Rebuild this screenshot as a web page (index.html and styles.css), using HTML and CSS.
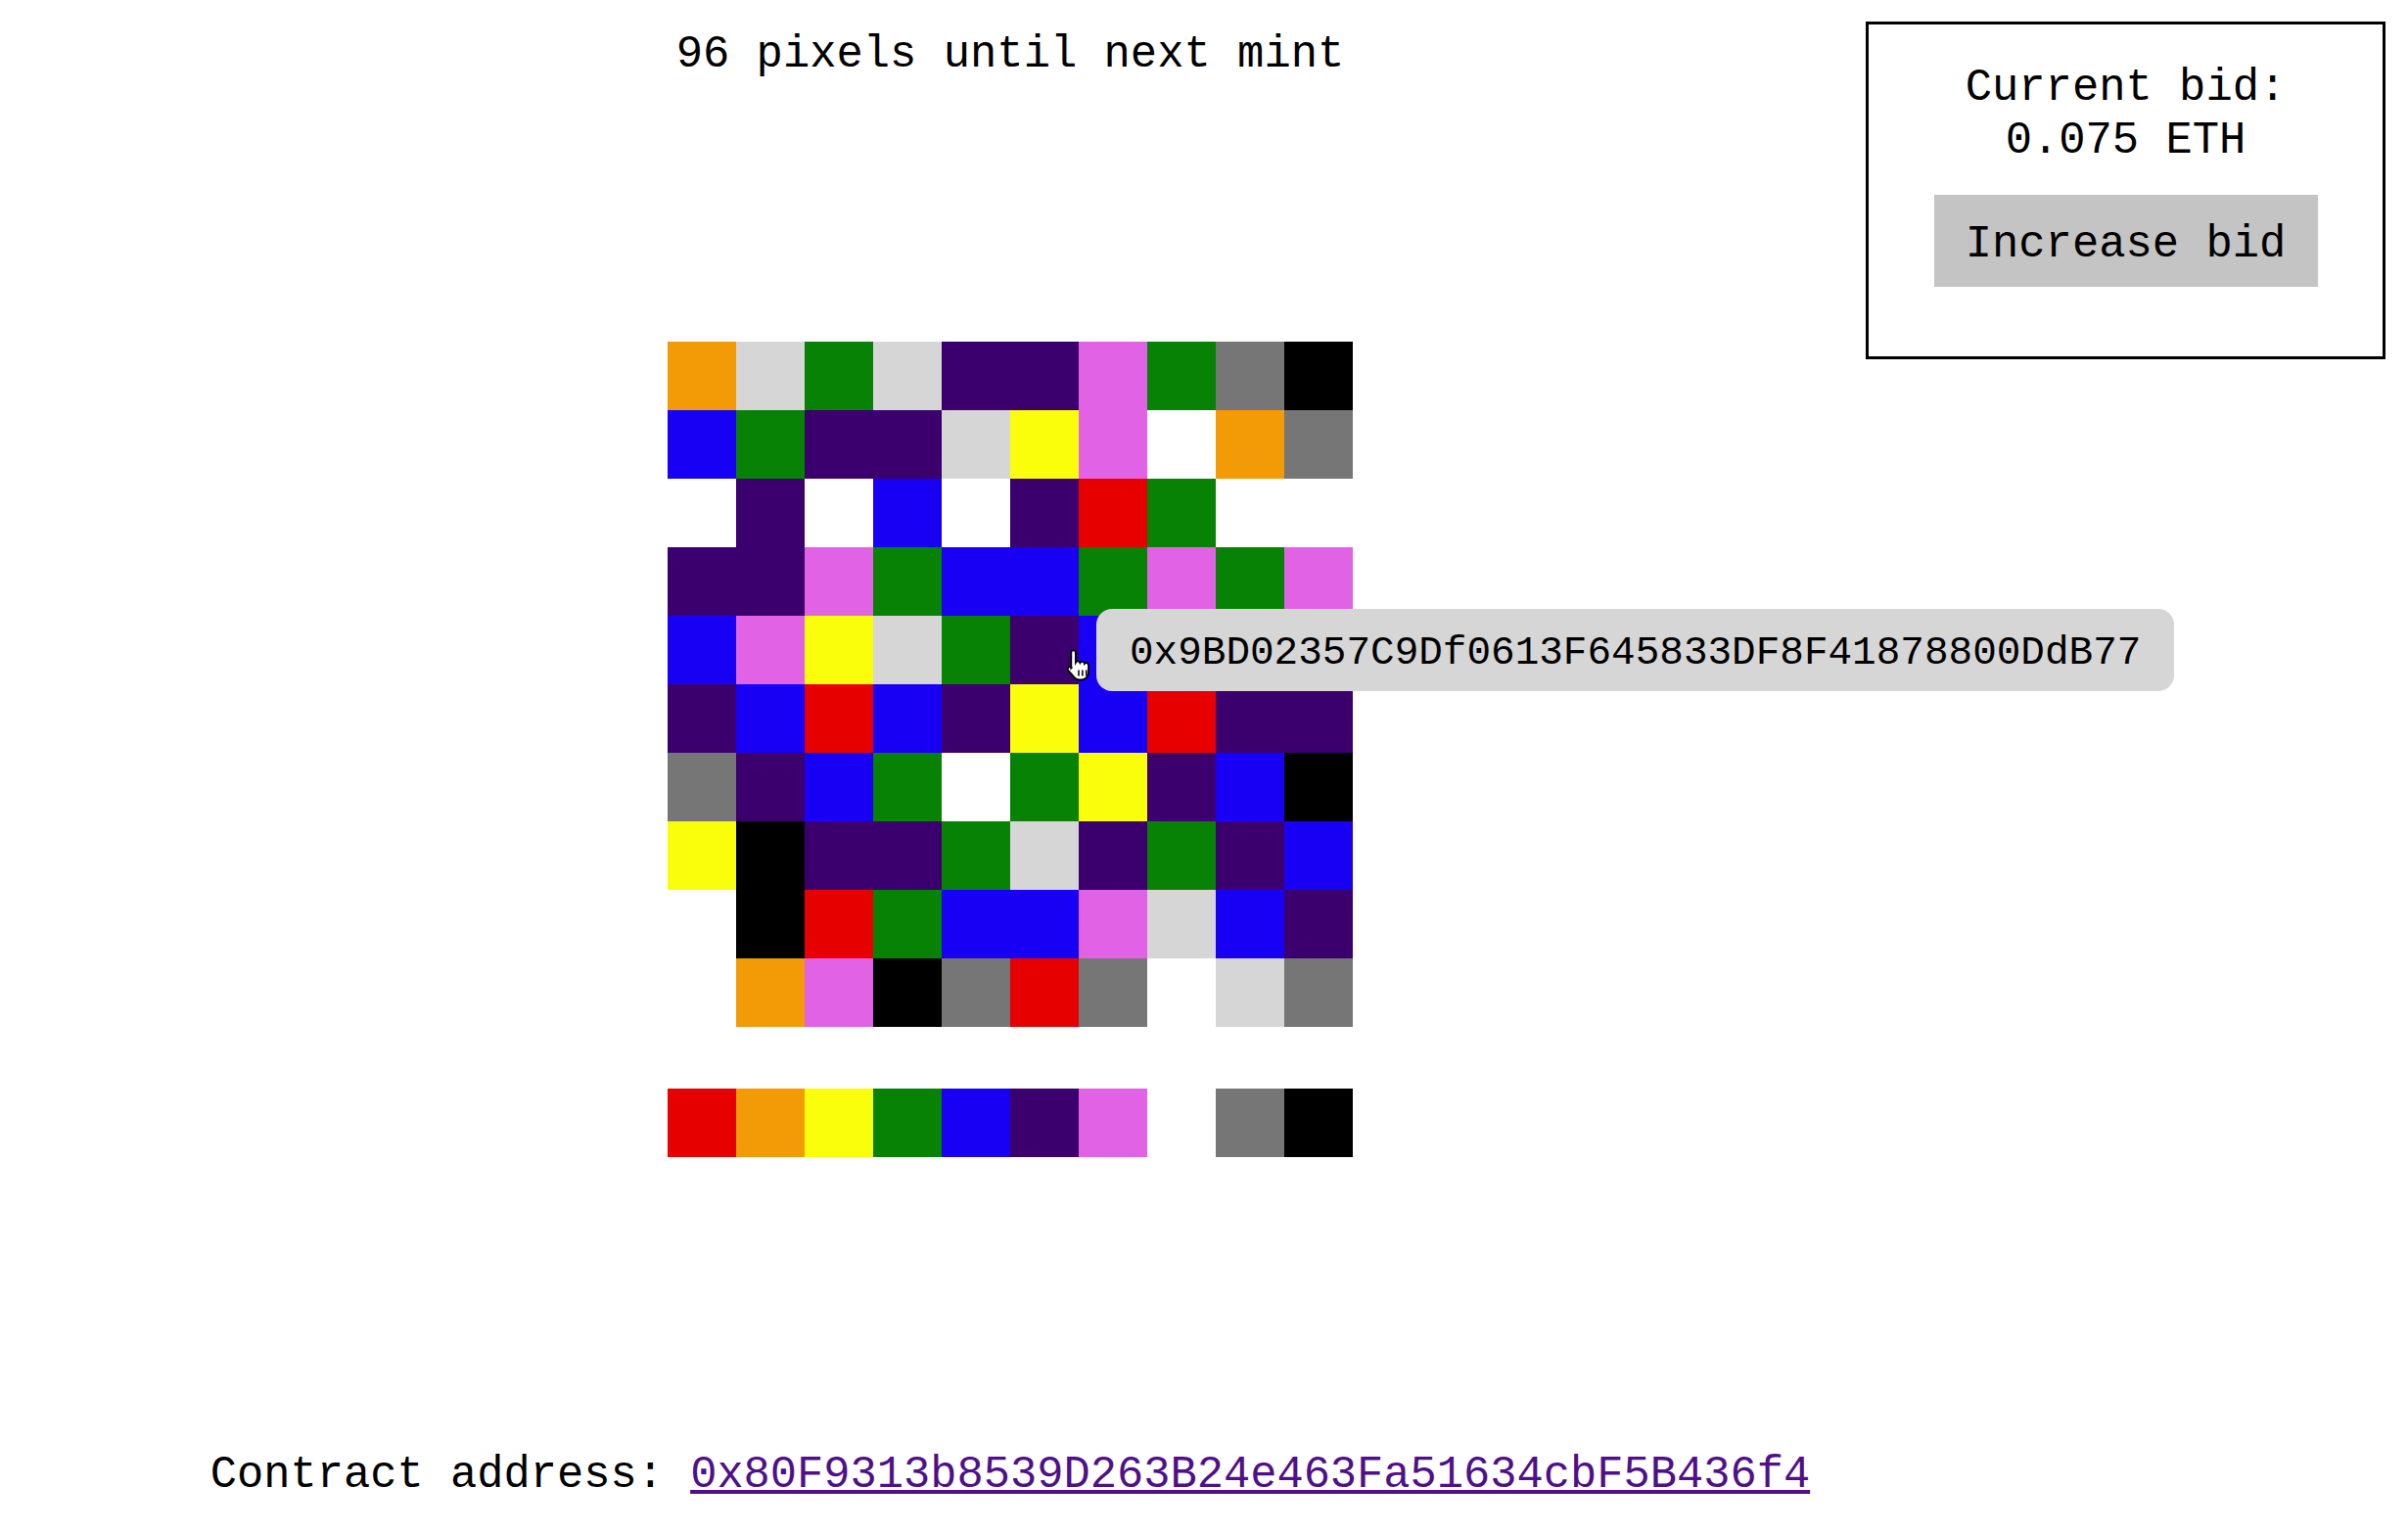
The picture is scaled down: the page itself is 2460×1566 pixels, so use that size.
FILE: index.html
```html
<!DOCTYPE html>
<html lang="en">
<head>
<meta charset="utf-8">
<title>Pixels</title>
<link rel="stylesheet" href="styles.css">
</head>
<body>
<div class="page">
  <main class="main">
    <div class="title">96 pixels until next mint</div>
    <div class="board-wrap">
      <div class="board">
        <div class="c o"></div><div class="c l"></div><div class="c g"></div><div class="c l"></div><div class="c p"></div><div class="c p"></div><div class="c k"></div><div class="c g"></div><div class="c a"></div><div class="c x"></div>
        <div class="c b"></div><div class="c g"></div><div class="c p"></div><div class="c p"></div><div class="c l"></div><div class="c y"></div><div class="c k"></div><div class="c w"></div><div class="c o"></div><div class="c a"></div>
        <div class="c w"></div><div class="c p"></div><div class="c w"></div><div class="c b"></div><div class="c w"></div><div class="c p"></div><div class="c r"></div><div class="c g"></div><div class="c w"></div><div class="c w"></div>
        <div class="c p"></div><div class="c p"></div><div class="c k"></div><div class="c g"></div><div class="c b"></div><div class="c b"></div><div class="c g"></div><div class="c k"></div><div class="c g"></div><div class="c k"></div>
        <div class="c b"></div><div class="c k"></div><div class="c y"></div><div class="c l"></div><div class="c g"></div><div class="c p"></div><div class="c b"></div><div class="c g"></div><div class="c k"></div><div class="c p"></div>
        <div class="c p"></div><div class="c b"></div><div class="c r"></div><div class="c b"></div><div class="c p"></div><div class="c y"></div><div class="c b"></div><div class="c r"></div><div class="c p"></div><div class="c p"></div>
        <div class="c a"></div><div class="c p"></div><div class="c b"></div><div class="c g"></div><div class="c w"></div><div class="c g"></div><div class="c y"></div><div class="c p"></div><div class="c b"></div><div class="c x"></div>
        <div class="c y"></div><div class="c x"></div><div class="c p"></div><div class="c p"></div><div class="c g"></div><div class="c l"></div><div class="c p"></div><div class="c g"></div><div class="c p"></div><div class="c b"></div>
        <div class="c w"></div><div class="c x"></div><div class="c r"></div><div class="c g"></div><div class="c b"></div><div class="c b"></div><div class="c k"></div><div class="c l"></div><div class="c b"></div><div class="c p"></div>
        <div class="c w"></div><div class="c o"></div><div class="c k"></div><div class="c x"></div><div class="c a"></div><div class="c r"></div><div class="c a"></div><div class="c w"></div><div class="c l"></div><div class="c a"></div>
      </div>
      <div class="tooltip">0x9BD02357C9Df0613F645833DF8F41878800DdB77</div>
      <svg class="cursor" viewBox="0 0 18 22" width="28" height="34" aria-hidden="true">
        <path d="M5.5 1.5c.9 0 1.5.6 1.5 1.5v6.5c.3-.5.8-.8 1.4-.8.8 0 1.3.5 1.5 1.1.3-.5.8-.8 1.4-.8.8 0 1.4.6 1.5 1.3.3-.4.7-.6 1.2-.6.9 0 1.5.7 1.5 1.6v4.7c0 2.8-2 5-4.8 5H9.6c-1.7 0-3-.8-4-2.1L2 14.8c-.5-.7-.4-1.6.3-2.1.6-.5 1.5-.4 2 .2L4 13.2V3c0-.9.6-1.5 1.5-1.5z" fill="#fff" stroke="#000" stroke-width="1.2"/>
        <path d="M9 14.5v4M11.5 14.5v4M14 14.5v4" stroke="#000" stroke-width="1"/>
      </svg>
    </div>
    <div class="palette">
      <div class="c r"></div><div class="c o"></div><div class="c y"></div><div class="c g"></div><div class="c b"></div><div class="c p"></div><div class="c k"></div><div class="c w"></div><div class="c a"></div><div class="c x"></div>
    </div>
    <div class="contract">Contract address: <a class="addr" href="#">0x80F9313b8539D263B24e463Fa51634cbF5B436f4</a></div>
  </main>
  <aside class="bid">
    <div class="bid-text">Current bid:<br>0.075 ETH</div>
    <button class="bid-btn" type="button">Increase bid</button>
  </aside>
</div>
</body>
</html>
```

FILE: styles.css
```css
html, body {
  margin: 0;
  padding: 0;
  background: #fff;
}

body {
  font-family: "Liberation Mono", "Courier New", monospace;
  color: #000;
  width: 2460px;
  height: 1566px;
  overflow: hidden;
}

.page {
  position: relative;
  width: 2460px;
  height: 1566px;
}

.main {
  width: 2064px;
  display: flex;
  flex-direction: column;
  align-items: center;
}

.title {
  margin-top: 30px;
  font-size: 45.5px;
  line-height: 52px;
  white-space: nowrap;
}

.board-wrap {
  position: relative;
  margin-top: 267px;
  width: 700px;
  height: 700px;
}

.board,
.palette {
  display: grid;
  grid-template-columns: repeat(10, 70px);
  grid-auto-rows: 70px;
  width: 700px;
}

.palette {
  margin-top: 63px;
}

.c { width: 70px; height: 70px; }
.r { background: #e60000; }
.o { background: #f39a07; }
.y { background: #fbfe0b; }
.g { background: #078205; }
.b { background: #1800f4; }
.p { background: #3c006e; }
.k { background: #e262e6; }
.w { background: #ffffff; }
.a { background: #767676; }
.x { background: #000000; }
.l { background: #d6d6d6; }

.tooltip {
  position: absolute;
  left: 438px;
  top: 273px;
  padding: 20px 34px 14px;
  font-size: 41px;
  line-height: 50px;
  white-space: nowrap;
  background: #d6d6d6;
  border-radius: 16px;
}

.cursor {
  position: absolute;
  left: 406px;
  top: 313px;
  z-index: 2;
}

.contract {
  margin-top: 298px;
  font-size: 45.4px;
  line-height: 54px;
  white-space: nowrap;
}

.addr {
  color: #4f1088;
  text-decoration: underline;
}

.bid {
  position: absolute;
  top: 22px;
  right: 23px;
  width: 531px;
  height: 345px;
  box-sizing: border-box;
  border: 3px solid #000;
  padding: 38px 0 71px;
  display: flex;
  flex-direction: column;
  align-items: center;
}

.bid-text {
  font-size: 45.5px;
  line-height: 54px;
  text-align: center;
  white-space: nowrap;
}

.bid-btn {
  margin-top: 28px;
  width: 392px;
  height: 94px;
  box-sizing: border-box;
  padding: 24px 0 16px;
  border: none;
  background: #c4c4c4;
  font-family: "Liberation Mono", "Courier New", monospace;
  font-size: 45.5px;
  line-height: 54px;
  color: #000;
  border-radius: 0;
}
```
